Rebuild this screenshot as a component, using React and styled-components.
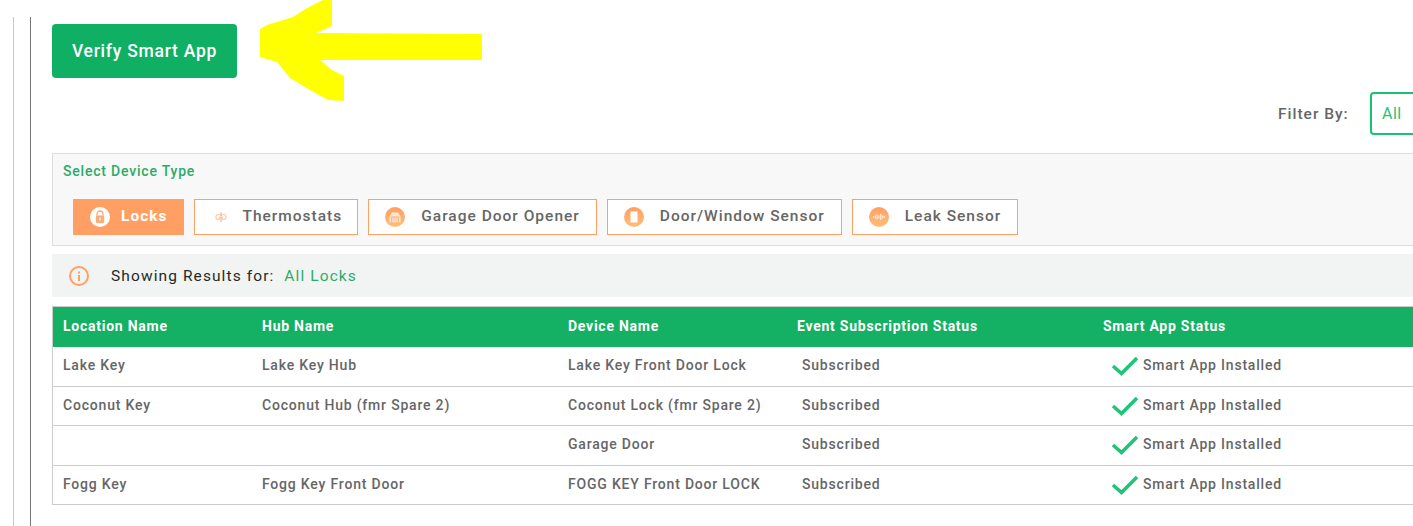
import React from 'react';
import styled, { createGlobalStyle } from 'styled-components';

const GlobalStyle = createGlobalStyle`
  html, body {
    margin: 0;
    padding: 0;
    background: #fff;
    font-family: Roboto, "Liberation Sans", sans-serif;
    overflow: hidden;
  }
`;

const devices = [
  { name: 'Locks', icon: 'lock', active: true },
  { name: 'Thermostats', icon: 'thermostat' },
  { name: 'Garage Door Opener', icon: 'garage' },
  { name: 'Door/Window Sensor', icon: 'door' },
  { name: 'Leak Sensor', icon: 'leak' },
];

const rows = [
  { location: 'Lake Key', hub: 'Lake Key Hub', device: 'Lake Key Front Door Lock', height: 40 },
  { location: 'Coconut Key', hub: 'Coconut Hub (fmr Spare 2)', device: 'Coconut Lock (fmr Spare 2)', height: 39 },
  { location: '', hub: '', device: 'Garage Door', height: 40 },
  { location: 'Fogg Key', hub: 'Fogg Key Front Door', device: 'FOGG KEY Front Door LOCK', height: 39 },
];

function DeviceIcon({ type, active }) {
  const glyph = active ? '#ffab78' : '#fff';
  return (
    <IconDisc $type={type} $active={active}>
      <svg width="20" height="20" viewBox="0 0 20 20">
        {type === 'lock' && (
          <>
            <path d="M7 9V7a3 3 0 0 1 6 0v2" fill="none" stroke={glyph} strokeWidth="1.3" />
            <rect x="5.8" y="8.5" width="8.4" height="7.5" rx="1.5" fill={glyph} />
            <rect x="9.4" y="10.5" width="1.2" height="3" fill="#fff" />
          </>
        )}
        {type === 'thermostat' && (
          <>
            <path d="M10 5c1.4 1.5 1.4 3.5 0 5.5-1.4-2-1.400-4 0-5.500z" fill="#ffb78c" />
            <path d="M8.300 7.500C6.500 6.800 5 8 4.800 10c.3 2 2 3 3.500 2 1-.8.500-1.800-.300-1.800" fill="none" stroke="#ffc9a6" strokeWidth="1.300" />
            <path d="M11.700 7.500c1.800-.7 3.300.5 3.500 2.500-.3 2-2 3-3.500 2-1-.8-.5-1.800.3-1.800" fill="none" stroke="#ffc9a6" strokeWidth="1.300" />
            <path d="M10 10v5" stroke="#ffb78c" strokeWidth="1.300" fill="none" />
          </>
        )}
        {type === 'garage' && (
          <>
            <path d="M4.500 15.500V9.500L7 5.500h6l2.500 4v6H14V9.500H6v6z" fill="#ffe6d2" />
            <rect x="6.800" y="10.500" width="6.400" height="5" fill="#ffe6d2" opacity="0.75" />
          </>
        )}
        {type === 'door' && <rect x="6.500" y="4.500" width="7" height="11" fill="#fff" />}
        {type === 'leak' && (
          <path
            d="M4.500 9v2M6.300 8.500v3M8.100 7.500v5M9.900 8.500v3M11.700 7v6M13.500 8.500v3M15.300 9v2"
            stroke="#ffe6d2"
            strokeWidth="1.300"
            fill="none"
          />
        )}
      </svg>
    </IconDisc>
  );
}

export default function App() {
  return (
    <>
      <GlobalStyle />
      <Page>
        <OuterRail />
        <Main>
          <VerifyButton>Verify Smart App</VerifyButton>
          <Arrow width="224" height="102" viewBox="0 0 224 102">
            <path
              d="M0 29 L7 25 L33 17 L47 8 L63 0 L72 0 L72 26 L56 33 L222 34 L222 60 L60 60 L72 70 L84 76 L84 101 L68 100 L50 90 L30 78 L17 62 L0 57 Z"
              fill="#ffff00"
            />
          </Arrow>
          <FilterRow>
            <FilterLabel>Filter By:</FilterLabel>
            <FilterSelect>All</FilterSelect>
          </FilterRow>
          <DevicePanel>
            <PanelTitle>Select Device Type</PanelTitle>
            <DeviceList>
              {devices.map((d) => (
                <DeviceButton key={d.name} $active={d.active} $tight={d.icon === 'thermostat'}>
                  <DeviceIcon type={d.icon} active={d.active} />
                  <DeviceName>{d.name}</DeviceName>
                </DeviceButton>
              ))}
            </DeviceList>
          </DevicePanel>
          <ResultsBar>
            <svg width="22" height="22" viewBox="0 0 22 22">
              <circle cx="11" cy="11" r="9" fill="none" stroke="#ff9f63" strokeWidth="2" />
              <rect x="10" y="10" width="2" height="6" fill="#ff9f63" />
              <rect x="10" y="6.500" width="2" height="2" fill="#ff9f63" />
            </svg>
            <ResultsLabel>Showing Results for:</ResultsLabel>
            <ResultsValue>All Locks</ResultsValue>
          </ResultsBar>
          <Table>
            <thead>
              <tr>
                <HeadCell $width={199.5}>Location Name</HeadCell>
                <HeadCell $width={306}>Hub Name</HeadCell>
                <HeadCell $width={229}>Device Name</HeadCell>
                <HeadCell $width={306}>Event Subscription Status</HeadCell>
                <HeadCell $width={359.5}>Smart App Status</HeadCell>
              </tr>
            </thead>
            <tbody>
              {rows.map((r) => (
                <Row key={r.device} $height={r.height}>
                  <Cell>{r.location}</Cell>
                  <Cell>{r.hub}</Cell>
                  <Cell>{r.device}</Cell>
                  <Cell>
                    <Subscribed>Subscribed</Subscribed>
                  </Cell>
                  <Cell>
                    <Installed>
                      <svg width="28" height="22" viewBox="0 0 28 22">
                        <path d="M2 12 L10.500 19.500 L26 4" fill="none" stroke="#1fc476" strokeWidth="3.500" />
                      </svg>
                      Smart App Installed
                    </Installed>
                  </Cell>
                </Row>
              ))}
            </tbody>
          </Table>
        </Main>
      </Page>
    </>
  );
}

const Page = styled.div`
  position: relative;
  display: flex;
  width: 1413px;
  height: 526px;
  padding: 17px 0 0 13px;
  box-sizing: border-box;
  overflow: hidden;
`;

const OuterRail = styled.div`
  width: 1px;
  background: #c8c8c8;
  margin-right: 16px;
  flex-shrink: 0;
`;

const Main = styled.main`
  position: relative;
  flex-shrink: 0;
  width: 1500px;
  border-left: 1px solid #777;
  padding: 7px 0 0 21px;
  box-sizing: border-box;
`;

const VerifyButton = styled.button`
  display: block;
  width: 185px;
  height: 54px;
  border: 0;
  border-radius: 4px;
  background: #0fb063;
  color: #fff;
  font-family: inherit;
  font-size: 17.5px;
  font-weight: 500;
  letter-spacing: 0.75px;
  padding: 0;
`;

const Arrow = styled.svg`
  position: absolute;
  left: 229px;
  top: -17px;
`;

const FilterRow = styled.div`
  display: flex;
  align-items: center;
  height: 43px;
  margin-top: 14px;
  padding-left: 1226px;
`;

const FilterLabel = styled.span`
  width: 92px;
  font-size: 15.5px;
  font-weight: 500;
  letter-spacing: 1px;
  color: #666;
`;

const FilterSelect = styled.div`
  display: flex;
  align-items: center;
  width: 100px;
  height: 43px;
  box-sizing: border-box;
  padding-left: 10px;
  border: 2px solid #14c374;
  border-radius: 4px;
  color: #2bbf78;
  font-size: 16px;
  letter-spacing: 0.5px;
`;

const DevicePanel = styled.section`
  height: 93px;
  margin-top: 18px;
  box-sizing: border-box;
  padding: 9px 10px 0;
  background: #f8f8f8;
  border: 1px solid #ddd;
`;

const PanelTitle = styled.div`
  font-size: 14px;
  font-weight: 500;
  line-height: 16px;
  letter-spacing: 0.8px;
  color: #2bab68;
`;

const DeviceList = styled.div`
  display: flex;
  gap: 10px;
  margin-top: 20px;
  padding-left: 10px;
`;

const DeviceButton = styled.div`
  display: flex;
  align-items: center;
  height: 36px;
  box-sizing: border-box;
  padding: ${(p) => (p.$tight ? '0 15px 0 16px' : '0 16px')};
  border: 1px solid #ff9f63;
  background: ${(p) => (p.$active ? '#ff9f63' : '#fff')};
  color: ${(p) => (p.$active ? '#fff' : '#666')};
  font-size: 15.5px;
  font-weight: ${(p) => (p.$active ? 700 : 500)};
  letter-spacing: 1px;
  gap: ${(p) => (p.$active || p.$tight ? '11px' : '16px')};
`;

const DeviceName = styled.span`
  padding-bottom: 3px;
`;

const IconDisc = styled.span`
  display: flex;
  align-items: center;
  justify-content: center;
  width: 20px;
  height: 20px;
  border-radius: 50%;
  background: ${(p) => {
    if (p.$active || p.$type === 'thermostat') return '#fff';
    return 'linear-gradient(180deg, #ff9f63, #ffbe78)';
  }};
`;

const ResultsBar = styled.div`
  display: flex;
  align-items: center;
  height: 43px;
  margin-top: 8px;
  padding-left: 16px;
  background: #f2f4f3;
  font-size: 15.5px;
  letter-spacing: 1.1px;
`;

const ResultsLabel = styled.span`
  margin-left: 21px;
  color: #1f2b27;
`;

const ResultsValue = styled.span`
  margin-left: 10px;
  color: #2bab68;
`;

const Table = styled.table`
  margin-top: 9px;
  border-collapse: collapse;
  table-layout: fixed;
  width: 1400px;
  border: 1px solid #ccc;
`;

const HeadCell = styled.th`
  width: ${(p) => p.$width}px;
  height: 40px;
  padding: 0 0 2px 10px;
  box-sizing: border-box;
  background: #14b064;
  color: #fff;
  font-size: 14px;
  font-weight: 700;
  letter-spacing: 0.75px;
  text-align: left;
`;

const Row = styled.tr`
  height: ${(p) => p.$height}px;
  border-bottom: 1px solid #ccc;
`;

const Cell = styled.td`
  padding: 10px 0 0 10px;
  vertical-align: top;
  line-height: 16px;
  color: #666;
  font-size: 14px;
  font-weight: 500;
  letter-spacing: 0.8px;
`;

const Subscribed = styled.span`
  padding-left: 5px;
`;

const Installed = styled.span`
  display: flex;
  align-items: center;
  height: 16px;
  padding-left: 8px;
  gap: 4px;
`;
